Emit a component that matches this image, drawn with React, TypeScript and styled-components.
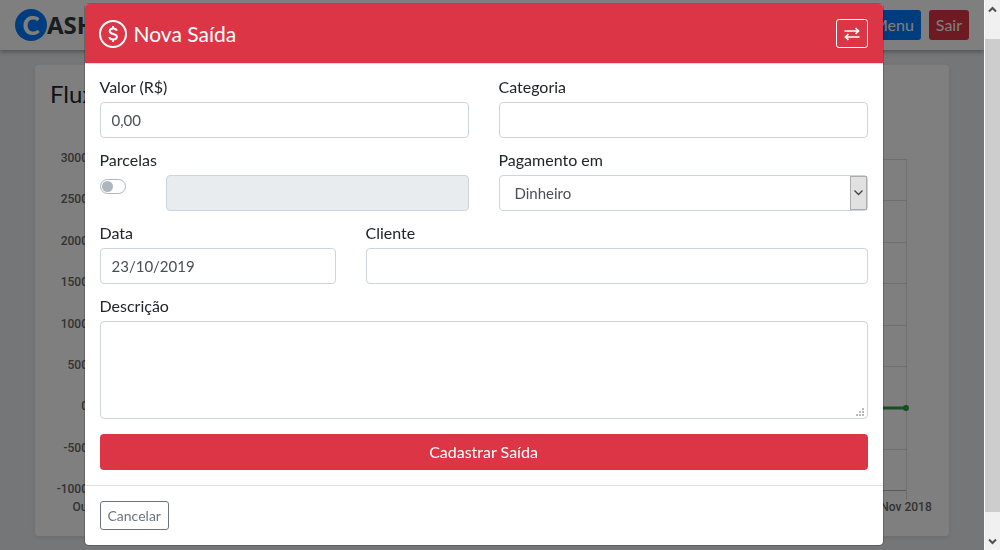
import React from "react";
import styled, { createGlobalStyle, css } from "styled-components";

const GlobalStyle = createGlobalStyle`
  *, *::before, *::after { box-sizing: border-box; }
  html, body { margin: 0; height: 100%; }
  #root { height: 100%; }
  body {
    background: #e9ecef;
    color: #212529;
    font-family: Lato, "Liberation Sans", sans-serif;
    font-size: 16px;
    line-height: 22px;
    overflow: hidden;
  }
  button, input, select, textarea { font: inherit; }
`;

const Screen = styled.div`
  display: grid;
  grid-template-columns: minmax(0, 1fr) 17px;
  height: 100vh;
  overflow: hidden;
`;

const Page = styled.div`
  height: 100vh;
  overflow: hidden;
`;

const Navbar = styled.header`
  display: flex;
  align-items: center;
  justify-content: space-between;
  height: 50px;
  padding: 0 15px;
  background: #fff;
  box-shadow: 0 2px 4px rgba(0, 0, 0, 0.3);
`;

const Brand = styled.a`
  display: flex;
  align-items: center;
  color: #343a40;
  font-family: "Noto Sans", "Open Sans", sans-serif;
  font-size: 24px;
  font-weight: 700;
  line-height: 32px;
  text-decoration: none;
`;

const BrandMark = styled.span`
  display: flex;
  align-items: center;
  justify-content: center;
  width: 32px;
  height: 32px;
  border-radius: 50%;
  background: #007bff;
  color: #fff;
  font-family: Lato, sans-serif;
  font-size: 26px;
  font-weight: 900;
`;

const NavActions = styled.div`
  display: flex;
  gap: 8px;
`;

const NavButton = styled.button<{ $danger?: boolean }>`
  height: 30px;
  padding: 0 7px;
  border: 0;
  border-radius: 3px;
  background: ${(p) => (p.$danger ? "#dc3545" : "#007bff")};
  color: #fff;
`;

const Card = styled.section`
  margin: 15px 35px;
  padding: 15px;
  border-radius: 4px;
  background: #fff;
  box-shadow: 0 2px 4px rgba(0, 0, 0, 0.08);
`;

const CardTitle = styled.h2`
  margin: 0;
  font-size: 24px;
  font-weight: 400;
  line-height: 28px;
`;

const ChartArea = styled.div`
  padding: 51px 28px 0 45px;
`;

const ChartSvg = styled.svg`
  display: block;
  width: 100%;
  height: 362px;
  overflow: visible;
  font-family: Roboto, sans-serif;
  font-size: 12px;
  font-weight: 500;
  fill: #666;
`;

const Backdrop = styled.div`
  position: fixed;
  inset: 0 17px 0 0;
  padding: 3px 17px 0 0;
  background: rgba(0, 0, 0, 0.5);
`;

const Dialog = styled.div`
  max-width: 800px;
  margin: 0 auto;
  border: 1px solid rgba(0, 0, 0, 0.2);
  border-radius: 5px;
  background: #fff;
  background-clip: padding-box;
`;

const DialogHeader = styled.div`
  display: flex;
  align-items: center;
  justify-content: space-between;
  height: 60px;
  padding: 0 15px 0 14px;
  border-bottom: 1px solid #dee2e6;
  border-radius: 4px 4px 0 0;
  background: #dc3545;
  color: #fff;
`;

const DialogTitle = styled.h1`
  display: flex;
  align-items: center;
  gap: 7px;
  margin: 0;
  font-size: 21px;
  font-weight: 400;
  line-height: 28px;
`;

const SwapButton = styled.button`
  display: flex;
  align-items: center;
  justify-content: center;
  width: 32px;
  height: 29px;
  padding: 0;
  border: 1px solid #fff;
  border-radius: 3px;
  background: transparent;
  color: #fff;
`;

const Form = styled.form`
  display: grid;
  grid-template-columns: repeat(12, minmax(0, 1fr));
  gap: 15px 30px;
  padding: 16px 15px 15px;
`;

const Field = styled.div<{ $span: number }>`
  grid-column: span ${(p) => p.$span};
`;

const Label = styled.label`
  display: block;
  height: 22px;
  line-height: 14px;
`;

const control = css`
  display: block;
  width: 100%;
  height: 36px;
  padding: 0 11px;
  border: 1px solid #ced4da;
  border-radius: 4px;
  background: #fff;
  color: #495057;
  font-size: 15px;
  outline: 0;
`;

const Input = styled.input`
  ${control}
  &:disabled { background: #e9ecef; }
`;

const Textarea = styled.textarea`
  ${control}
  height: 98px;
  padding: 7px 11px;
  resize: none;
`;

const ControlWrap = styled.div`
  position: relative;
`;

const Select = styled.select`
  ${control}
  padding: 0 30px 0 15px;
  appearance: none;
`;

const SelectArrow = styled.span`
  position: absolute;
  inset: 1px 1px 1px auto;
  display: flex;
  align-items: center;
  justify-content: center;
  width: 17px;
  border: 1px solid #adadad;
  background: #e1e1e1;
  pointer-events: none;
`;

const Grip = styled.svg`
  position: absolute;
  right: 4px;
  bottom: 3px;
  pointer-events: none;
`;

const Installments = styled.div`
  display: grid;
  grid-template-columns: 36px minmax(0, 1fr);
  gap: 30px;
`;

const Switch = styled.input`
  appearance: none;
  width: 26px;
  height: 15px;
  margin: 4px 0 0;
  padding: 1px;
  border: 1px solid #adb5bd;
  border-radius: 8px;
  background: #fff;
  &::before {
    content: "";
    display: block;
    width: 11px;
    height: 11px;
    border-radius: 50%;
    background: #adb5bd;
  }
  &:checked::before { margin-left: auto; }
`;

const SubmitButton = styled.button`
  grid-column: 1 / -1;
  height: 36px;
  border: 0;
  border-radius: 4px;
  background: #dc3545;
  color: #fff;
`;

const DialogFooter = styled.div`
  padding: 15px;
  border-top: 1px solid #dee2e6;
`;

const CancelButton = styled.button`
  display: block;
  height: 29px;
  padding: 0 7px;
  border: 1px solid #6c757d;
  border-radius: 3px;
  background: transparent;
  color: #6c757d;
  font-size: 14px;
`;

const Scrollbar = styled.div`
  display: flex;
  flex-direction: column;
  align-items: center;
  justify-content: space-between;
  padding: 6px 0 5px;
  border: solid #fff;
  border-width: 0 1px;
  background: #f0f0f0;
`;

const ScrollThumb = styled.div`
  flex: 1;
  width: 100%;
  margin: 26px 0;
  background: #cdcdcd;
`;

const ticks = [3000, 2500, 2000, 1500, 1000, 500, 0, -500, -1000];
const tickY = (i: number) => Math.round(i * 41.4);

function BalanceChart() {
  return (
    <ChartArea>
      <ChartSvg role="img" aria-label="Fluxo">
        {ticks.map((value, i) => (
          <g key={value}>
            <line
              x1="0"
              x2="100%"
              y1={tickY(i)}
              y2={tickY(i)}
              stroke={i === ticks.length - 1 ? "#b5b5b5" : "#dedede"}
              shapeRendering="crispEdges"
            />
            <text x="-7" y={tickY(i) + 3} textAnchor="end">{value}</text>
          </g>
        ))}
        <line x1="100%" x2="100%" y1="0" y2="341" stroke="#dedede" shapeRendering="crispEdges" />
        <line x1="0" x2="100%" y1="249" y2="249" stroke="#2f9e44" strokeWidth="3" />
        <circle cx="100%" cy="249" r="3" fill="#2f9e44" />
        <text x="2" y="352" textAnchor="middle">Out 2018</text>
        <text x="100%" y="352" textAnchor="middle">Nov 2018</text>
      </ChartSvg>
    </ChartArea>
  );
}

function DollarIcon() {
  return (
    <svg width="28" height="28" viewBox="0 0 28 28" fill="none" stroke="#fff" strokeWidth="2" aria-hidden="true">
      <circle cx="14" cy="14" r="13" />
      <path d="M17.800 10.800C17.300 9.300 16 8.600 14.200 8.600c-2.100 0-3.500 1-3.500 2.600 0 3.800 7.200 1.900 7.200 5.600 0 1.700-1.500 2.700-3.700 2.700-2.100 0-3.500-.9-4-2.500M14.100 6v3M14.100 19v3" />
    </svg>
  );
}

function SwapIcon() {
  return (
    <svg width="16" height="14" viewBox="0 0 16 14" fill="none" stroke="currentColor" strokeWidth="1.700" aria-hidden="true">
      <path d="M.5 4h14M11.500 1.200l3 2.800-3 2.800M15.500 10h-14M4.500 7.200l-3 2.800 3 2.800" />
    </svg>
  );
}

function Chevron({ up = false }: { up?: boolean }) {
  return (
    <svg width="9" height="7" viewBox="0 0 9 7" fill="none" stroke="#505050" strokeWidth="2" aria-hidden="true">
      <path d={up ? "M1 5.500 4.500 2 8 5.500" : "M1 1.500 4.500 5 8 1.500"} />
    </svg>
  );
}

export default function App() {
  return (
    <>
      <GlobalStyle />
      <Screen>
        <Page>
          <Navbar>
            <Brand href="#"><BrandMark>C</BrandMark>ASH</Brand>
            <NavActions>
              <NavButton type="button">Menu</NavButton>
              <NavButton type="button" $danger>Sair</NavButton>
            </NavActions>
          </Navbar>
          <Card>
            <CardTitle>Fluxo</CardTitle>
            <BalanceChart />
          </Card>
        </Page>
        <Scrollbar aria-hidden="true">
          <Chevron up />
          <ScrollThumb />
          <Chevron />
        </Scrollbar>
      </Screen>
      <Backdrop>
        <Dialog role="dialog" aria-modal="true" aria-labelledby="dialog-title">
          <DialogHeader>
            <DialogTitle id="dialog-title"><DollarIcon />Nova Saída</DialogTitle>
            <SwapButton type="button" aria-label="Trocar"><SwapIcon /></SwapButton>
          </DialogHeader>
          <Form>
            <Field $span={6}>
              <Label htmlFor="valor">Valor (R$)</Label>
              <Input id="valor" defaultValue="0,00" />
            </Field>
            <Field $span={6}>
              <Label htmlFor="categoria">Categoria</Label>
              <Input id="categoria" />
            </Field>
            <Field $span={6}>
              <Label id="parcelas-label" htmlFor="parcelas">Parcelas</Label>
              <Installments>
                <Switch id="parcelas" type="checkbox" />
                <Input aria-labelledby="parcelas-label" disabled />
              </Installments>
            </Field>
            <Field $span={6}>
              <Label htmlFor="pagamento">Pagamento em</Label>
              <ControlWrap>
                <Select id="pagamento"><option>Dinheiro</option></Select>
                <SelectArrow>
                  <svg width="9" height="6" viewBox="0 0 9 6" fill="none" stroke="#444" strokeWidth="1.300" aria-hidden="true">
                    <path d="M.5.5 4.500 4.500 8.500.5" />
                  </svg>
                </SelectArrow>
              </ControlWrap>
            </Field>
            <Field $span={4}>
              <Label htmlFor="data">Data</Label>
              <Input id="data" defaultValue="23/10/2019" />
            </Field>
            <Field $span={8}>
              <Label htmlFor="cliente">Cliente</Label>
              <Input id="cliente" />
            </Field>
            <Field $span={12}>
              <Label htmlFor="descricao">Descrição</Label>
              <ControlWrap>
                <Textarea id="descricao" />
                <Grip width="8" height="8" viewBox="0 0 8 8" fill="#bbb" aria-hidden="true">
                  <path d="M6 0h2v2H6zM3 3h2v2H3zM6 3h2v2H6zM0 6h2v2H0zM3 6h2v2H3zM6 6h2v2H6z" />
                </Grip>
              </ControlWrap>
            </Field>
            <SubmitButton type="button">Cadastrar Saída</SubmitButton>
          </Form>
          <DialogFooter>
            <CancelButton type="button">Cancelar</CancelButton>
          </DialogFooter>
        </Dialog>
      </Backdrop>
    </>
  );
}
